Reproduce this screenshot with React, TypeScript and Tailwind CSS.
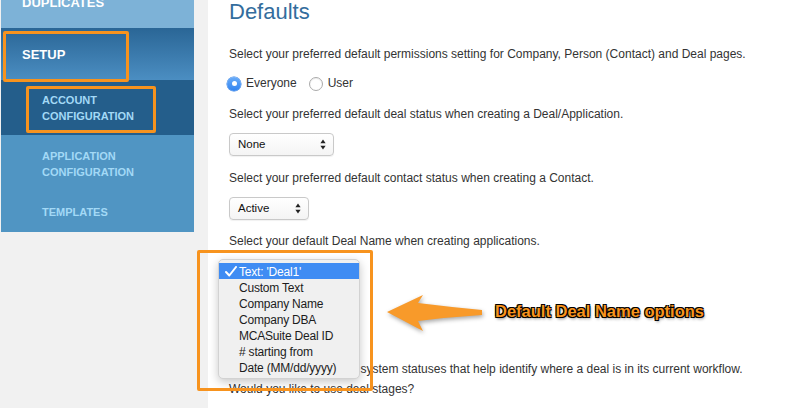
import React from "react";

const menuItems = [
  "Text: 'Deal1'",
  "Custom Text",
  "Company Name",
  "Company DBA",
  "MCASuite Deal ID",
  "# starting from",
  "Date (MM/dd/yyyy)",
];

function Arrows() {
  return (
    <svg width="6" height="11" viewBox="0 0 6 11" className="shrink-0">
      <path d="M3 0.5 L5.6 4.2 L0.4 4.2 Z" fill="#222" />
      <path d="M3 10.5 L5.6 6.8 L0.4 6.8 Z" fill="#222" />
    </svg>
  );
}

function Select({ label, width }: { label: string; width: string }) {
  return (
    <div
      className={`${width} flex h-[23px] items-center justify-between rounded-[4px] border border-[#c9c9c9] bg-gradient-to-b from-white to-[#f4f4f4] pl-[8px] pr-[7px] text-[11.5px] text-[#111] shadow-[0_1px_1px_rgba(0,0,0,0.06)]`}
    >
      <span>{label}</span>
      <Arrows />
    </div>
  );
}

function Radio({ checked, label }: { checked?: boolean; label: string }) {
  return (
    <label className="flex items-center gap-[5px]">
      {checked ? (
        <span className="flex h-[14px] w-[14px] items-center justify-center rounded-full bg-gradient-to-b from-[#69acf9] to-[#2f83f0] shadow-[0_0_0_0.5px_#2a78de]">
          <span className="h-[5px] w-[5px] rounded-full bg-white" />
        </span>
      ) : (
        <span className="h-[14px] w-[14px] rounded-full border border-[#ababab] bg-white shadow-[inset_0_1px_1px_rgba(0,0,0,0.08)]" />
      )}
      <span>{label}</span>
    </label>
  );
}

export default function App() {
  return (
    <div className="relative flex h-[408px] w-[804px] overflow-hidden bg-white font-['Liberation_Sans',Arial,sans-serif]">
      {/* Sidebar */}
      <aside className="w-[208px] shrink-0 bg-[#f1f1f1] pl-px">
        <nav className="w-[193px] font-bold">
          <div className="h-[28px] overflow-hidden bg-[#7db2d7] pl-[21px]">
            <div className="-mt-[3px] text-[13px] leading-[12px] text-white">DUPLICATES</div>
          </div>
          <div className="flex h-[52px] items-center bg-gradient-to-b from-[#2a6696] to-[#4b8ec2] pl-[21px] pt-[2px] text-[13px] text-white">
            SETUP
          </div>
          <div className="h-[55px] bg-[#245e8b] pl-[41px] pt-[12px] text-[11px] leading-[16px] text-[#a3d9f6]">
            ACCOUNT
            <br />
            CONFIGURATION
          </div>
          <div className="flex flex-col gap-[24px] bg-[#5095c3] pb-[12px] pl-[41px] pt-[13px] text-[11px] leading-[16px] text-[#a3d9f6]">
            <div>
              APPLICATION
              <br />
              CONFIGURATION
            </div>
            <div>TEMPLATES</div>
          </div>
        </nav>
      </aside>

      {/* Content */}
      <main className="relative flex flex-1 flex-col items-start pl-[21px] text-[12px] leading-[17px] text-[#333]">
        <h1 className="text-[22px] leading-[24px] text-[#336d9d]">Defaults</h1>
        <p className="mt-[22px]">
          Select your preferred default permissions setting for Company, Person (Contact) and Deal pages.
        </p>
        <div className="-ml-[2px] mt-[12px] flex h-[17px] items-center gap-[12px]">
          <Radio checked label="Everyone" />
          <Radio label="User" />
        </div>
        <p className="mt-[14px]">Select your preferred default deal status when creating a Deal/Application.</p>
        <div className="mt-[10px]">
          <Select label="None" width="w-[105px]" />
        </div>
        <p className="mt-[14px]">Select your preferred default contact status when creating a Contact.</p>
        <div className="mt-[10px]">
          <Select label="Active" width="w-[80px]" />
        </div>
        <p className="mt-[13px]">Select your default Deal Name when creating applications.</p>
        <div className="mt-[9px]">
          <Select label="Text: 'Deal1'" width="w-[124px]" />
        </div>
        <p className="mt-[79px]">
          Deal Stages are custom system statuses that help identify where a deal is in its current workflow.
        </p>
        <p className="mt-[3px]">Would you like to use deal stages?</p>

        {/* Open dropdown menu */}
        <div className="absolute left-[10px] top-[259px] w-[142px] rounded-[5px] border border-[#d2d2d2] bg-[#f0f0f0] py-[3px] text-[12px] tracking-[-0.2px] text-[#1c1c1c] shadow-[0_3px_10px_rgba(0,0,0,0.22)]">
          {menuItems.map((item, i) => (
            <div
              key={item}
              className={`relative h-[16px] pl-[20px] leading-[18px] ${i === 0 ? "bg-[#3f8cf3] text-white" : ""}`}
            >
              {i === 0 && (
                <svg
                  width="12"
                  height="11"
                  viewBox="0 0 12 11"
                  className="absolute left-[6px] top-[3px]"
                >
                  <path d="M1 6 L4.3 9.5 L11 1" fill="none" stroke="white" strokeWidth="2" strokeLinecap="round" strokeLinejoin="round" />
                </svg>
              )}
              {item}
            </div>
          ))}
        </div>
      </main>

      {/* Annotations */}
      <div className="absolute left-[3px] top-[31px] h-[51px] w-[126px] rounded-[2px] border-[3px] border-[#f7931e]" />
      <div className="absolute left-[26px] top-[86px] h-[47px] w-[130px] rounded-[2px] border-[3px] border-[#f7931e]" />
      <div className="absolute left-[197px] top-[250px] h-[141px] w-[176px] rounded-[2px] border-[3px] border-[#f7931e]" />
      <svg
        width="110"
        height="50"
        viewBox="0 0 110 50"
        className="absolute left-[380px] top-[288px] drop-shadow-[1px_2px_2px_rgba(0,0,0,0.35)]"
      >
        <path
          d="M7 24 L43 7 L38 15 Q70 19 102 22 L102 27 Q70 29 38 33 L43 43 Z"
          fill="#f89a2a"
        />
      </svg>
      <div className="absolute left-[495px] top-[301px] text-[16.5px] font-bold leading-[20px] text-[#f7941d] [text-shadow:-1px_-1px_0_#000,1px_-1px_0_#000,-1px_1px_0_#000,1px_1px_0_#000,0_0_1px_#000,1px_2px_3px_rgba(0,0,0,0.5)]">
        Default Deal Name options
      </div>
    </div>
  );
}
